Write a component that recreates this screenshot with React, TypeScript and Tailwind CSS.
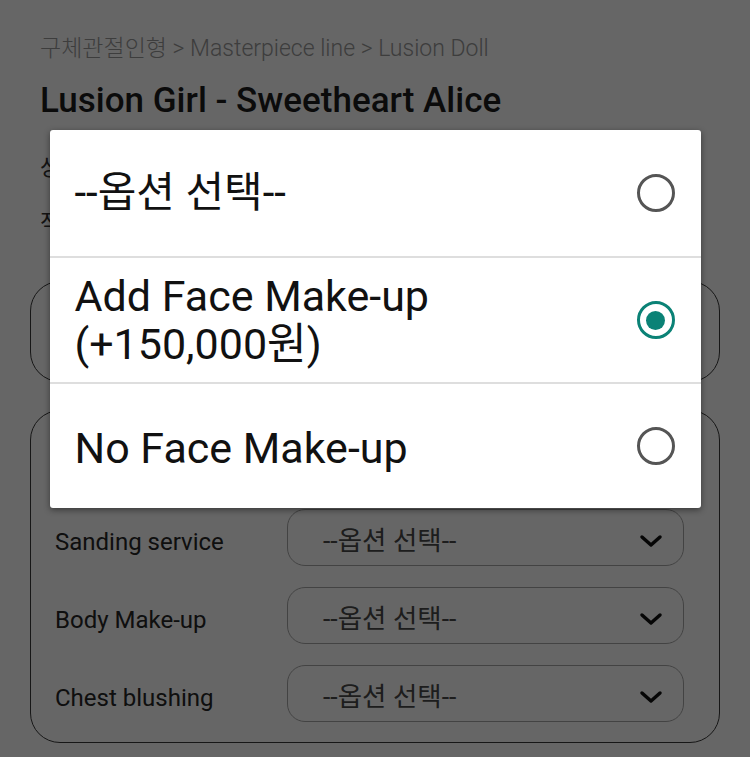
import React from "react";

function Chevron() {
  return (
    <svg width="24" height="14" viewBox="0 0 24 14" fill="none">
      <path d="M3 3 L12 11 L21 3" stroke="#111" strokeWidth="3.5" strokeLinecap="round" strokeLinejoin="round" />
    </svg>
  );
}

function SelectRow({ label }: { label: string }) {
  return (
    <div className="flex h-[57px] items-center">
      <div className="w-[232px] pt-[9px] text-[24px] leading-[28px] text-[#262626]">{label}</div>
      <div className="flex h-[57px] w-[397px] items-center justify-between rounded-[18px] border border-[#a8a8a8] pl-[35px] pr-[20px] pt-[6px]">
        <span className="text-[26.5px] leading-[30px] text-[#4a4a4a]">--옵션 선택--</span>
        <Chevron />
      </div>
    </div>
  );
}

function Radio({ checked }: { checked?: boolean }) {
  if (checked) {
    return (
      <div className="flex h-[38px] w-[38px] shrink-0 items-center justify-center rounded-full border-[3px] border-[#0b8276]">
        <div className="h-[19px] w-[19px] rounded-full bg-[#0b8276]" />
      </div>
    );
  }
  return <div className="h-[38px] w-[38px] shrink-0 rounded-full border-[3px] border-[#555555]" />;
}

export default function App() {
  return (
    <div className="relative h-[757px] w-full overflow-hidden bg-white font-['Roboto','Noto_Sans_CJK_KR',sans-serif]">
      <div className="px-[30px] pt-[35px]">
        <div className="pl-[10px] text-[23px] font-light leading-[28px] text-[#989898]">
          구체관절인형 &gt; Masterpiece line &gt; Lusion Doll
        </div>
        <div className="mt-[18px] pl-[10px] text-[35px] font-medium leading-[40px] text-[#1c1c1c]">
          Lusion Girl - Sweetheart Alice
        </div>
        <div className="mt-[33px] pl-[10px] text-[22px] leading-[28px] text-[#333]">상</div>
        <div className="mt-[27px] pl-[10px] text-[22px] leading-[28px] text-[#333]">적</div>
        <div className="mt-[44px] h-[101px] rounded-[30px] border border-[#3a3a3a]" />
        <div className="mt-[28px] flex flex-col gap-[21px] rounded-[30px] border border-[#3a3a3a] px-[24px] py-[20px]">
          <div className="h-[57px]" />
          <SelectRow label="Sanding service" />
          <SelectRow label="Body Make-up" />
          <SelectRow label="Chest blushing" />
        </div>
      </div>

      <div className="absolute inset-0 flex items-start justify-center bg-black/60 pt-[130px]">
        <div className="w-[651px] overflow-hidden rounded-[3px] bg-white shadow-[0_2px_6px_rgba(0,0,0,0.45)]">
          <div className="flex h-[126px] items-center justify-between pl-[25px] pr-[26px]">
            <span className="text-[42px] leading-[48px] text-[#111]">--옵션 선택--</span>
            <Radio />
          </div>
          <div className="flex h-[126px] items-center justify-between border-t-2 border-[#dedede] pl-[25px] pr-[26px]">
            <span className="text-[43px] leading-[48px] text-[#111]">
              Add Face Make-up
              <br />
              (+150,000원)
            </span>
            <Radio checked />
          </div>
          <div className="flex h-[126px] items-center justify-between border-t-2 border-[#dedede] pl-[25px] pr-[26px]">
            <span className="pt-[4px] text-[43px] leading-[48px] text-[#111]">No Face Make-up</span>
            <Radio />
          </div>
        </div>
      </div>
    </div>
  );
}
